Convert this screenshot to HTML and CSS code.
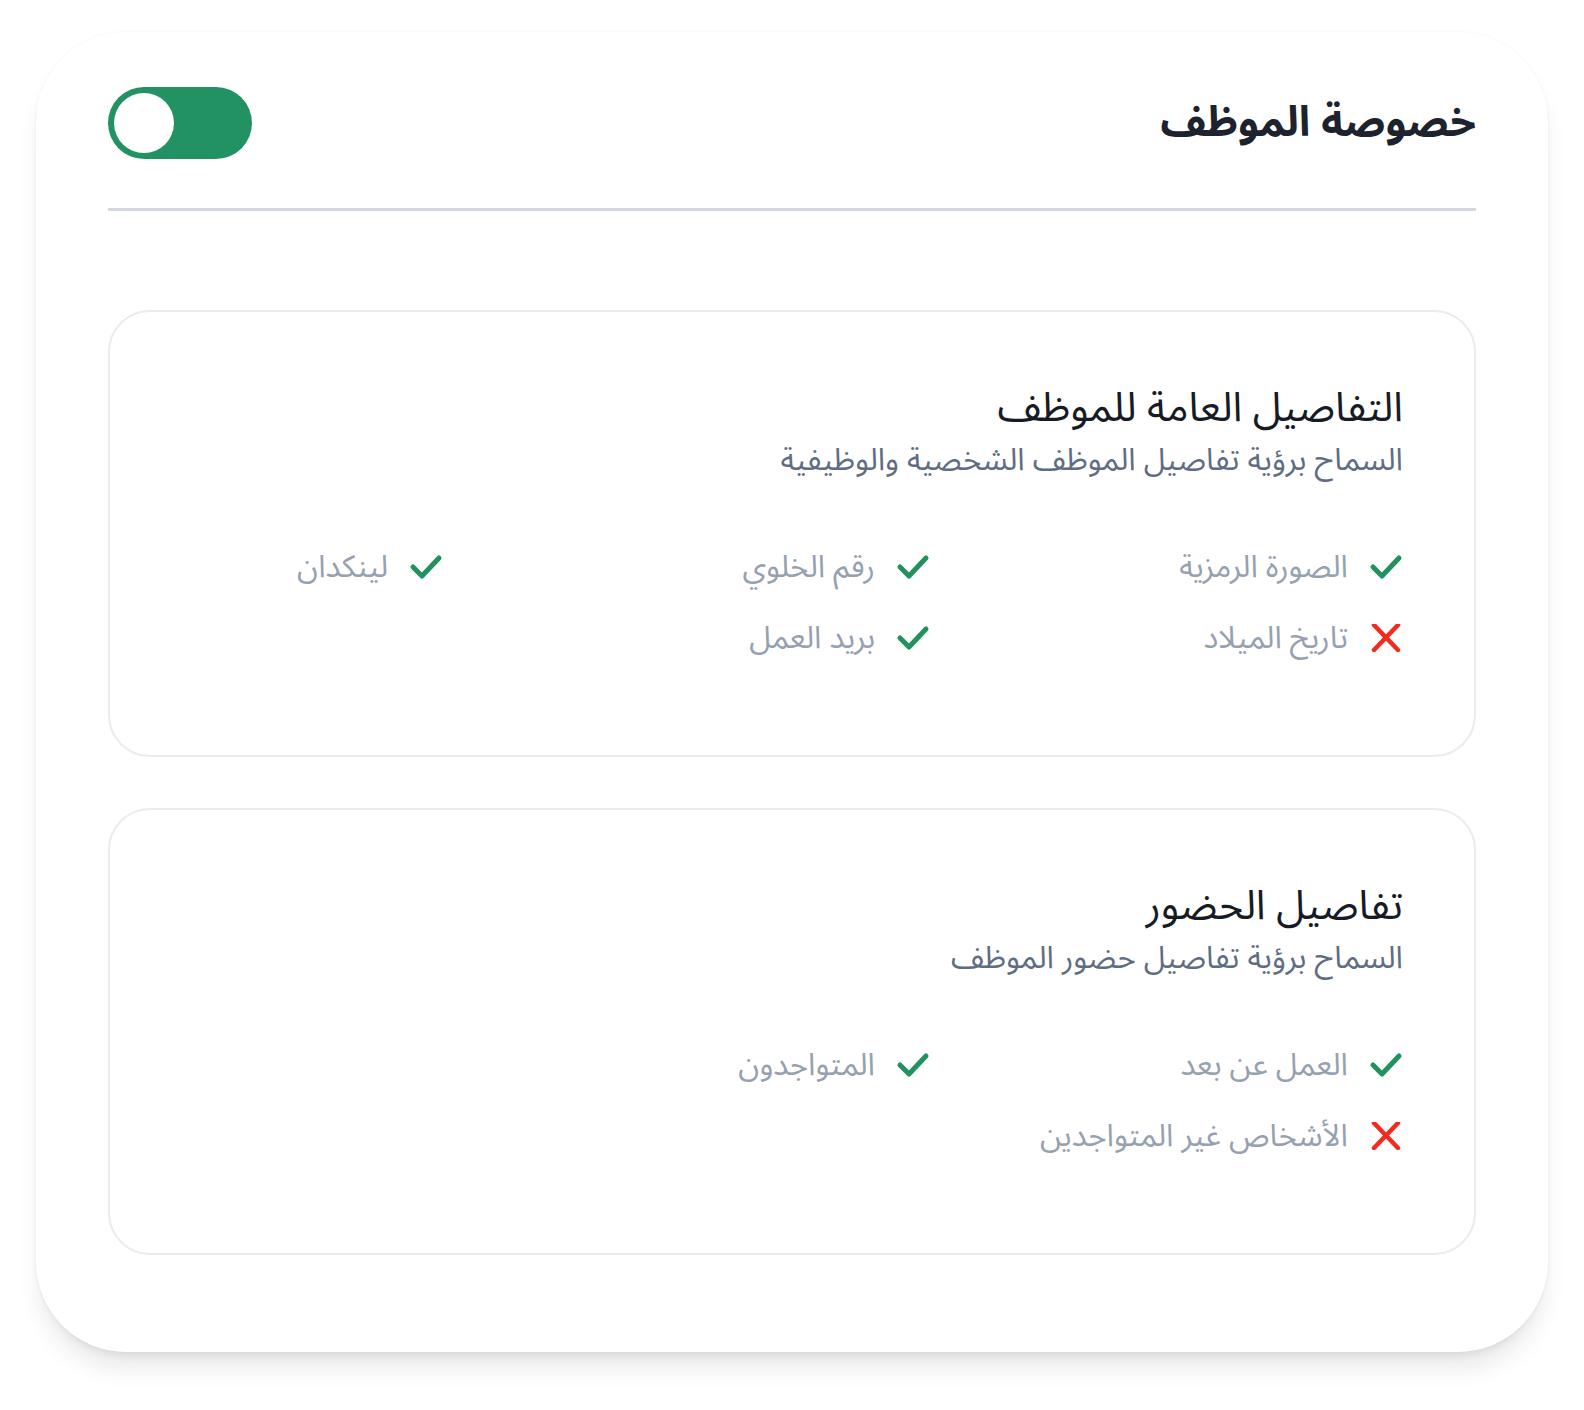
FILE: index.html
```html
<!DOCTYPE html>
<html lang="ar" dir="rtl">
<head>
<meta charset="utf-8">
<title>خصوصة الموظف</title>
<link rel="stylesheet" href="styles.css">
</head>
<body>
<div class="panel">
  <div class="panel-head">
    <h1 class="panel-title">خصوصة الموظف</h1>
    <div class="toggle" role="switch" aria-checked="true"><span class="knob"></span></div>
  </div>
  <div class="divider"></div>

  <section class="card">
    <h2 class="card-title">التفاصيل العامة للموظف</h2>
    <p class="card-sub">السماح برؤية تفاصيل الموظف الشخصية والوظيفية</p>
    <div class="items">
      <div class="item"><svg class="ic" viewBox="0 0 34 28"><polyline points="4,14 13,23 30,5" class="ok"/></svg><span>الصورة الرمزية</span></div>
      <div class="item"><svg class="ic" viewBox="0 0 34 28"><polyline points="4,14 13,23 30,5" class="ok"/></svg><span>رقم الخلوي</span></div>
      <div class="item"><svg class="ic" viewBox="0 0 34 28"><polyline points="4,14 13,23 30,5" class="ok"/></svg><span>لينكدان</span></div>
      <div class="item"><svg class="ic" viewBox="0 0 34 28"><path d="M5 1 L29 26 M29 1 L5 26" class="no"/></svg><span>تاريخ الميلاد</span></div>
      <div class="item"><svg class="ic" viewBox="0 0 34 28"><polyline points="4,14 13,23 30,5" class="ok"/></svg><span>بريد العمل</span></div>
    </div>
  </section>

  <section class="card">
    <h2 class="card-title">تفاصيل الحضور</h2>
    <p class="card-sub">السماح برؤية تفاصيل حضور الموظف</p>
    <div class="items">
      <div class="item"><svg class="ic" viewBox="0 0 34 28"><polyline points="4,14 13,23 30,5" class="ok"/></svg><span>العمل عن بعد</span></div>
      <div class="item"><svg class="ic" viewBox="0 0 34 28"><polyline points="4,14 13,23 30,5" class="ok"/></svg><span>المتواجدون</span></div>
      <div class="item empty"></div>
      <div class="item"><svg class="ic" viewBox="0 0 34 28"><path d="M5 1 L29 26 M29 1 L5 26" class="no"/></svg><span>الأشخاص غير المتواجدين</span></div>
    </div>
  </section>
</div>
</body>
</html>
```

FILE: styles.css
```css
html, body {
  margin: 0;
  padding: 0;
  background: #ffffff;
}
body {
  padding: 32px 36px 40px;
  font-family: "Noto Sans Arabic", "DejaVu Sans", "Noto Sans", sans-serif;
}
.panel {
  background: #ffffff;
  border-radius: 90px;
  padding: 55px 72px 97px;
  box-shadow: 0 20px 25px -5px rgba(17, 24, 39, 0.10), 0 8px 10px -6px rgba(17, 24, 39, 0.08), 0 0 3px rgba(17, 24, 39, 0.05);
}
.panel-head {
  display: flex;
  justify-content: space-between;
  align-items: center;
  height: 72px;
}
.panel-title {
  margin: 0;
  font-size: 42px;
  font-weight: 700;
  color: #1c222e;
  line-height: 72px;
}
.toggle {
  width: 144px;
  height: 72px;
  border-radius: 36px;
  background: #229262;
  display: flex;
  align-items: center;
  justify-content: flex-end;
  padding: 0 6px;
  box-sizing: border-box;
}
.knob {
  width: 60px;
  height: 60px;
  border-radius: 50%;
  background: #ffffff;
}
.divider {
  height: 3px;
  background: #d3d8de;
  margin-top: 49px;
  margin-bottom: 99px;
}
.card {
  border: 2px solid #ebebed;
  border-radius: 42px;
  padding: 70px 71px 82px;
}
.card + .card {
  margin-top: 51px;
}
.card-title {
  margin: 0;
  font-size: 41px;
  font-weight: 400;
  line-height: 52px;
  color: #161b26;
}
.card-sub {
  margin: 3px 0 0;
  font-size: 31px;
  line-height: 46px;
  color: #5f6d84;
}
.items {
  margin-top: 48px;
  display: grid;
  grid-template-columns: 473px 487px 1fr;
  grid-auto-rows: 71px;
}
.item {
  display: flex;
  align-items: center;
  gap: 21px;
  font-size: 31px;
  color: #95a1b0;
}
.ic {
  width: 34px;
  height: 28px;
  flex: none;
}
.ok {
  fill: none;
  stroke: #22915f;
  stroke-width: 5;
  stroke-linecap: round;
  stroke-linejoin: round;
}
.no {
  fill: none;
  stroke: #f42a1f;
  stroke-width: 4.5;
  stroke-linecap: round;
}
```
